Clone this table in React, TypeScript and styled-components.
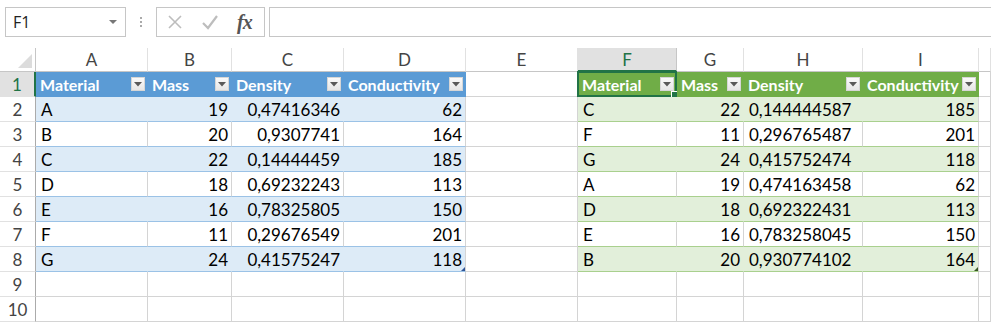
import React from 'react'
import styled, { createGlobalStyle, css } from 'styled-components'

const GlobalStyle = createGlobalStyle`
  html, body {
    margin: 0;
    padding: 0;
    background: #fff;
    overflow: hidden;
  }
  * {
    box-sizing: border-box;
  }
`

type Tone = 'blue' | 'green'
type Kind = 'empty' | 'head' | 'band' | 'row'

const TONES = {
  blue: { head: '#5b9bd5', band: '#ddebf7', line: '#9bc2e6', mark: '#2f5597' },
  green: { head: '#70ad47', band: '#e2efda', line: '#a9d08e', mark: '#375623' },
}

// J only peeks in at the right edge, its letter is off screen
const COLS = [
  { key: 'A', w: 112, label: 'A' },
  { key: 'B', w: 84, label: 'B' },
  { key: 'C', w: 112, label: 'C' },
  { key: 'D', w: 122, label: 'D' },
  { key: 'E', w: 112, label: 'E' },
  { key: 'F', w: 99, label: 'F' },
  { key: 'G', w: 67, label: 'G' },
  { key: 'H', w: 119, label: 'H' },
  { key: 'I', w: 116, label: 'I' },
  { key: 'J', w: 12, label: '' },
]

const HEADERS = ['Material', 'Mass', 'Density', 'Conductivity']

const LEFT = [
  ['A', '19', '0,47416346', '62'],
  ['B', '20', '0,9307741', '164'],
  ['C', '22', '0,14444459', '185'],
  ['D', '18', '0,69232243', '113'],
  ['E', '16', '0,78325805', '150'],
  ['F', '11', '0,29676549', '201'],
  ['G', '24', '0,41575247', '118'],
]

const RIGHT = [
  ['C', '22', '0,144444587', '185'],
  ['F', '11', '0,296765487', '201'],
  ['G', '24', '0,415752474', '118'],
  ['A', '19', '0,474163458', '62'],
  ['D', '18', '0,692322431', '113'],
  ['E', '16', '0,783258045', '150'],
  ['B', '20', '0,930774102', '164'],
]

const Sheet = styled.div`
  width: 991px;
  height: 325px;
  font-family: Lato, 'Liberation Sans', sans-serif;
  color: #000;
`

/* ---------- formula bar ---------- */

const FormulaBar = styled.div`
  display: flex;
  align-items: center;
  height: 48px;
  padding: 0 0 4px 5px;
`

const NameBox = styled.div`
  flex: none;
  display: flex;
  align-items: center;
  justify-content: space-between;
  width: 121px;
  height: 30px;
  padding: 0 8px 0 7px;
  border: 1px solid #c6c6c6;
  font-family: 'Open Sans', 'Noto Sans', sans-serif;
  font-size: 16px;
  color: #222;
`

const Caret = styled.span`
  width: 0;
  height: 0;
  border-left: 4px solid transparent;
  border-right: 4px solid transparent;
  border-top: 4px solid #777;
`

const Grip = styled.div`
  flex: none;
  display: flex;
  flex-direction: column;
  gap: 2px;
  width: 30px;
  align-items: center;

  span {
    width: 2px;
    height: 2px;
    background: #aaa;
  }
`

const FuncBox = styled.div`
  flex: none;
  display: flex;
  align-items: center;
  width: 109px;
  height: 30px;
  padding: 0 10px 0 10px;
  gap: 18px;
  border: 1px solid #c6c6c6;
`

const FxLabel = styled.span`
  font-family: 'Liberation Serif', serif;
  font-style: italic;
  font-weight: 700;
  font-size: 20px;
  color: #555;
  letter-spacing: -1px;
  line-height: 1;
`

const FormulaInput = styled.div`
  flex: 1;
  height: 30px;
  margin-left: 4px;
  border: 1px solid #c6c6c6;
  border-right: none;
`

/* ---------- grid ---------- */

const Row = styled.div`
  display: flex;
  height: 25px;
`

const HeaderRow = styled(Row)`
  height: 24px;
`

const Corner = styled.div`
  position: relative;
  flex: none;
  width: 36px;
  height: 24px;
  border-right: 1px solid #c6c6c6;
  border-bottom: 1px solid #c6c6c6;

  svg {
    position: absolute;
    right: 3px;
    bottom: 3px;
  }
`

const ColHead = styled.div<{ $w: number; $sel?: boolean }>`
  flex: none;
  width: ${(p) => p.$w}px;
  height: 24px;
  display: flex;
  align-items: center;
  justify-content: center;
  font-size: 17px;
  color: #444;
  background: #fff;
  border-right: 1px solid #e1e1e1;
  border-bottom: 1px solid #c6c6c6;

  ${(p) =>
    p.$sel &&
    css`
      background: #e1e1e1;
      color: #217346;
      border-right-color: #c6c6c6;
      border-bottom: 2px solid #217346;
    `}
`

const RowHead = styled.div<{ $sel?: boolean }>`
  flex: none;
  width: 36px;
  height: 25px;
  display: flex;
  align-items: center;
  justify-content: center;
  font-size: 17px;
  color: #444;
  border-right: 1px solid #ababab;
  border-bottom: 1px solid #e1e1e1;

  ${(p) =>
    p.$sel &&
    css`
      background: #e1e1e1;
      color: #217346;
      border-right: 2px solid #217346;
    `}
`

const Cell = styled.div<{
  $w: number
  $kind: Kind
  $tone: Tone
  $right?: boolean
  $edge?: boolean
}>`
  position: relative;
  flex: none;
  width: ${(p) => p.$w}px;
  height: 25px;
  display: flex;
  align-items: center;
  justify-content: ${(p) => (p.$right ? 'flex-end' : 'flex-start')};
  padding: 0 3px 0 5px;
  font-size: 17px;
  white-space: nowrap;
  border-right: 1px solid #d4d4d4;
  border-bottom: 1px solid #d4d4d4;

  ${(p) =>
    p.$kind === 'head' &&
    css`
      justify-content: flex-start;
      padding: 0 2px 0 4px;
      background: ${TONES[p.$tone].head};
      color: #fff;
      font-weight: 700;
      font-size: 16px;
      border-right-color: ${TONES[p.$tone].head};
      border-bottom-color: ${TONES[p.$tone].head};
    `}

  ${(p) =>
    p.$kind === 'band' &&
    css`
      background: ${TONES[p.$tone].band};
      border-right-color: ${p.$edge ? '#d4d4d4' : TONES[p.$tone].band};
      border-bottom-color: ${TONES[p.$tone].line};
    `}

  ${(p) =>
    p.$kind === 'row' &&
    css`
      border-bottom-color: ${TONES[p.$tone].line};
    `}
`

const HeadLabel = styled.span`
  flex: 1;
`

const FilterBtn = styled.span`
  flex: none;
  display: flex;
  align-items: center;
  justify-content: center;
  width: 14px;
  height: 14px;
  margin-left: 2px;
  background: linear-gradient(#fafafa, #e6e6e6);
  border: 1px solid #d6d6d6;
`

const Selection = styled.div`
  position: absolute;
  left: -1px;
  top: -1px;
  right: -1px;
  bottom: -1px;
  border: 2px solid #217346;
  pointer-events: none;

  &::after {
    content: '';
    position: absolute;
    right: -5px;
    bottom: -5px;
    width: 7px;
    height: 7px;
    background: #217346;
    border: 1px solid #fff;
  }
`

const ResizeMark = styled.span<{ $tone: Tone }>`
  position: absolute;
  right: 0;
  bottom: 0;
  width: 0;
  height: 0;
  border-left: 4px solid transparent;
  border-bottom: 4px solid ${(p) => TONES[p.$tone].mark};
`

const FilterIcon = () => (
  <svg width='8' height='5' viewBox='0 0 8 5'>
    <polygon points='0,0 8,0 4,4.5' fill='#595959' />
  </svg>
)

const tableAt = (col: number) => {
  if (col >= 0 && col <= 3) return { tone: 'blue' as Tone, first: 0, data: LEFT }
  if (col >= 5 && col <= 8) return { tone: 'green' as Tone, first: 5, data: RIGHT }
  return null
}

const App = () => {
  const rows = Array.from({ length: 10 }, (_, i) => i + 1)

  return (
    <Sheet>
      <GlobalStyle />
      <FormulaBar>
        <NameBox>
          F1
          <Caret />
        </NameBox>
        <Grip>
          <span />
          <span />
          <span />
        </Grip>
        <FuncBox>
          <svg width='16' height='16' viewBox='0 0 16 16'>
            <path d='M2 2 L14 14 M14 2 L2 14' stroke='#bdbdbd' strokeWidth='1.6' />
          </svg>
          <svg width='18' height='16' viewBox='0 0 18 16'>
            <path d='M2 9 L7 14 L16 2' stroke='#bdbdbd' strokeWidth='2.2' fill='none' />
          </svg>
          <FxLabel>fx</FxLabel>
        </FuncBox>
        <FormulaInput />
      </FormulaBar>

      <HeaderRow>
        <Corner>
          <svg width='14' height='14' viewBox='0 0 14 14'>
            <polygon points='14,0 14,14 0,14' fill='#dcdcdc' />
          </svg>
        </Corner>
        {COLS.map((c) => (
          <ColHead key={c.key} $w={c.w} $sel={c.key === 'F'}>
            {c.label}
          </ColHead>
        ))}
      </HeaderRow>

      {rows.map((r) => (
        <Row key={r}>
          <RowHead $sel={r === 1}>{r}</RowHead>
          {COLS.map((c, ci) => {
            const t = tableAt(ci)
            if (!t || r > 8) {
              return <Cell key={c.key} $w={c.w} $kind='empty' $tone='blue' />
            }
            const idx = ci - t.first
            const edge = idx === 3
            if (r === 1) {
              return (
                <Cell key={c.key} $w={c.w} $kind='head' $tone={t.tone}>
                  <HeadLabel>{HEADERS[idx]}</HeadLabel>
                  <FilterBtn>
                    <FilterIcon />
                  </FilterBtn>
                  {c.key === 'F' && <Selection />}
                </Cell>
              )
            }
            const text = t.data[r - 2][idx]
            const right = idx === 1 || idx === 3 || (idx === 2 && t.tone === 'blue')
            return (
              <Cell
                key={c.key}
                $w={c.w}
                $kind={r % 2 === 0 ? 'band' : 'row'}
                $tone={t.tone}
                $right={right}
                $edge={edge}
              >
                {text}
                {r === 8 && edge && <ResizeMark $tone={t.tone} />}
              </Cell>
            )
          })}
        </Row>
      ))}
    </Sheet>
  )
}

export default App
